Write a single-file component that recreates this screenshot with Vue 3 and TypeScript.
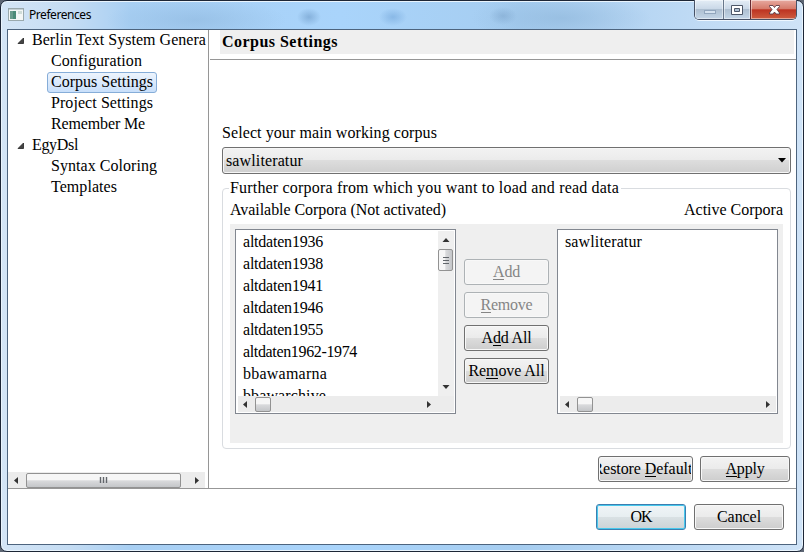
<script setup lang="ts">
import type { Directive } from 'vue'

interface TreeRow { label: string; width: number; parent?: boolean; selected?: boolean }
interface Action { before: string; key: string; after: string; width: number; disabled?: boolean }

const tree: TreeRow[] = [
  { label: 'Berlin Text System Genera', width: 174, parent: true },
  { label: 'Configuration', width: 91 },
  { label: 'Corpus Settings', width: 102, selected: true },
  { label: 'Project Settings', width: 102 },
  { label: 'Remember Me', width: 94 },
  { label: 'EgyDsl', width: 46, parent: true },
  { label: 'Syntax Coloring', width: 106 },
  { label: 'Templates', width: 66 },
]

const available = [
  { name: 'altdaten1936', width: 80 },
  { name: 'altdaten1938', width: 80 },
  { name: 'altdaten1941', width: 80 },
  { name: 'altdaten1946', width: 80 },
  { name: 'altdaten1955', width: 80 },
  { name: 'altdaten1962-1974', width: 114 },
  { name: 'bbawamarna', width: 84 },
  { name: 'bbawarchive', width: 83 },
]

const actions: Action[] = [
  { before: '', key: 'A', after: 'dd', width: 27, disabled: true },
  { before: '', key: 'R', after: 'emove', width: 52, disabled: true },
  { before: 'A', key: 'd', after: 'd All', width: 50 },
  { before: 'Re', key: 'm', after: 'ove All', width: 76 },
]

// Spreads the letters of a label over the given width in pixels.
const vFit: Directive<HTMLElement, number> = {
  mounted(el, { value }) {
    const count = (el.textContent ?? '').length
    const natural = el.getBoundingClientRect().width
    el.style.letterSpacing = `${(value - natural) / count}px`
  },
}
</script>

<template>
  <div class="window">
    <header class="titlebar">
      <svg class="app-icon" width="16" height="14" viewBox="0 0 16 14">
        <rect x=".5" y=".5" width="15" height="12" fill="#f4f7f6" stroke="#9aa9ad" />
        <rect x="2" y="3" width="6" height="8" fill="#4b8b78" />
        <rect x="2" y="3" width="3" height="8" fill="#6a9c8d" />
        <rect x="10" y="3" width="4" height="3" fill="#cfdcd8" />
        <path d="M1 1.5h14" stroke="#c5d1d6" />
      </svg>
      <span v-fit="62" class="fit title">Preferences</span>
      <div class="caption-buttons">
        <div class="cap min">
          <svg width="28" height="19" viewBox="0 0 28 19"><rect x="9.5" y="10.5" width="11" height="3" fill="#d5e2ef" stroke="#92a6bd" /></svg>
        </div>
        <div class="cap max">
          <svg width="26" height="19" viewBox="0 0 26 19"><path d="M7.500 5.500h11v9h-11zM10.500 8.500v3h5v-3z" fill="#fff" fill-rule="evenodd" stroke="#4d5768" /></svg>
        </div>
        <div class="cap close">
          <svg width="46" height="19" viewBox="0 0 46 19"><path d="M18.500 5.500h3.500l1.500 2 1.500-2h3.500v1l-2.500 3 2.500 3.500v1h-3.500l-1.500-2-1.500 2h-3.500v-1l2.500-3.500-2.500-3z" fill="#fff" stroke="#5b3b45" stroke-width=".9" /></svg>
        </div>
      </div>
    </header>

    <main class="client">
      <div class="upper">
        <nav class="sidebar">
          <div class="tree">
            <div v-for="row in tree" :key="row.label" class="tree-row" :class="{ child: !row.parent }">
              <svg v-if="row.parent" class="twisty" width="8" height="8" viewBox="0 0 8 8"><path d="M6.500 1v5.500H1z" fill="#444" stroke="#222" stroke-width=".8" /></svg>
              <span class="node" :class="{ selected: row.selected }"><span v-fit="row.width" class="fit">{{ row.label }}</span></span>
            </div>
          </div>
          <div class="hscroll side-scroll">
            <svg width="18" height="15" viewBox="0 0 18 15"><path d="M10 4v7L6 7.500z" fill="#333" /></svg>
            <div class="thumb wide">
              <svg width="9" height="8" viewBox="0 0 9 8"><path d="M1.500 1v6M4.500 1v6M7.500 1v6" stroke="#62666b" stroke-width="1.4" /></svg>
            </div>
            <svg class="end" width="18" height="15" viewBox="0 0 18 15"><path d="M8 4v7l4-3.500z" fill="#333" /></svg>
          </div>
        </nav>

        <section class="page">
          <div class="page-head">
            <h1><span v-fit="116" class="fit">Corpus Settings</span></h1>
          </div>
          <div class="page-body">
            <div class="select-label"><span v-fit="215" class="fit">Select your main working corpus</span></div>
            <div class="combo">
              <span v-fit="77" class="fit">sawliteratur</span>
              <svg width="8" height="5" viewBox="0 0 8 5"><path d="M0 0h8L4 4.500z" fill="#000" /></svg>
            </div>
            <fieldset class="group">
              <legend><span v-fit="389" class="fit">Further corpora from which you want to load and read data</span></legend>
              <div class="list-heads">
                <span v-fit="216" class="fit">Available Corpora (Not activated)</span>
                <span v-fit="99" class="fit">Active Corpora</span>
              </div>
              <div class="transfer">
                <div class="listbox">
                  <div class="list-main">
                    <div class="items">
                      <div v-for="item in available" :key="item.name" class="item"><span v-fit="item.width" class="fit">{{ item.name }}</span></div>
                    </div>
                    <div class="vscroll">
                      <svg width="16" height="18" viewBox="0 0 16 18"><path d="M4.500 11h7L8 7z" fill="#333" /></svg>
                      <div class="vthumb"><svg width="8" height="9" viewBox="0 0 8 9"><path d="M1 1.500h6M1 4.500h6M1 7.500h6" stroke="#62666b" /></svg></div>
                      <svg class="bottom" width="16" height="16" viewBox="0 0 16 16"><path d="M4.500 5h7L8 9z" fill="#333" /></svg>
                    </div>
                  </div>
                  <div class="hscroll with-corner">
                    <svg width="17" height="15" viewBox="0 0 17 15"><path d="M9 4v7L5 7.500z" fill="#333" /></svg>
                    <div class="thumb"></div>
                    <svg class="end" width="18" height="15" viewBox="0 0 18 15"><path d="M8 4v7l4-3.500z" fill="#333" /></svg>
                  </div>
                </div>
                <div class="actions">
                  <button v-for="a in actions" :key="a.key" class="btn" :disabled="a.disabled">
                    <span v-fit="a.width" class="fit">{{ a.before }}<u>{{ a.key }}</u>{{ a.after }}</span>
                  </button>
                </div>
                <div class="listbox">
                  <div class="list-main">
                    <div class="items">
                      <div class="item"><span v-fit="77" class="fit">sawliteratur</span></div>
                    </div>
                  </div>
                  <div class="hscroll">
                    <svg width="17" height="15" viewBox="0 0 17 15"><path d="M9 4v7L5 7.500z" fill="#333" /></svg>
                    <div class="thumb"></div>
                    <svg class="end" width="18" height="15" viewBox="0 0 18 15"><path d="M8 4v7l4-3.500z" fill="#333" /></svg>
                  </div>
                </div>
              </div>
            </fieldset>
            <div class="page-buttons">
              <button class="btn restore"><span class="clip"><span v-fit="106" class="fit">Restore <u>D</u>efaults</span></span></button>
              <button class="btn apply"><span v-fit="39" class="fit"><u>A</u>pply</span></button>
            </div>
          </div>
        </section>
      </div>
      <footer class="dialog-buttons">
        <button class="btn primary"><span v-fit="21" class="fit">OK</span></button>
        <button class="btn"><span v-fit="44" class="fit">Cancel</span></button>
      </footer>
    </main>
  </div>
</template>

<style>
body { background: #5d6674; overflow: hidden; }
</style>

<style scoped>
* { box-sizing: border-box; }
svg { display: block; flex: none; }
.window {
  width: 804px; height: 552px; padding: 0 6px 6px;
  display: flex; flex-direction: column;
  font: 16px/20px "Liberation Serif", serif; color: #000;
  border: 1px solid #1d2636; border-radius: 7px;
  box-shadow: inset 0 0 0 1px #e9f4fd;
  background:
    radial-gradient(ellipse 90px 22px at 195px 19px, #8fb8de99, transparent),
    radial-gradient(ellipse 12px 9px at 308px 16px, #6794c288, transparent),
    radial-gradient(ellipse 14px 9px at 392px 16px, #6ea2d788, transparent),
    radial-gradient(ellipse 14px 9px at 502px 15px, #7ca4cb88, transparent),
    radial-gradient(ellipse 90px 24px at 560px 17px, #8db5d999, transparent),
    linear-gradient(90deg, #d4e5f6 0, #c4dcf3 70px, #a8cff3 130px, #a9d4fb 340px, #a6cdf0 520px, #b7d6f3 640px, #cfe3f7 804px);
  background-color: #b8d6f3;
}
.fit { display: inline-block; white-space: pre; flex: none; }
.titlebar { height: 28px; flex: none; display: flex; align-items: flex-start; padding-left: 1px; }
.app-icon { margin-top: 7px; }
.title { font: 12px/16px "Noto Sans", sans-serif; margin: 6px 0 0 5px; }
.caption-buttons {
  display: flex; margin-left: auto; margin-right: 0; width: 103px; height: 20px; margin-top: -1px;
  border: 1px solid #475267; border-top: 0; border-radius: 0 0 5px 5px; overflow: hidden;
  box-shadow: 0 1px 0 #eef7ff;
}
.cap { height: 19px; background: linear-gradient(#e4edf6 0, #cbd9e8 45%, #aebfd1 50%, #c4d6e7 100%); box-shadow: inset 0 0 0 1px #ffffff77; }
.cap.min { width: 28px; }
.cap.max { width: 27px; border-left: 1px solid #68778b; }
.cap.close { flex: 1; border-left: 1px solid #672b32; background: linear-gradient(#e7aaa0 0, #d67c6c 45%, #bd3422 52%, #ce5c3f 100%); }

.client { width: 790px; height: 516px; border: 1px solid #4d647e; background: #fff; display: flex; flex-direction: column; }
.upper { height: 459px; flex: none; display: flex; border-bottom: 1px solid #979797; }
.sidebar { width: 201px; display: flex; flex-direction: column; border-right: 1px solid #969696; flex: none; }
.tree { width: 198px; height: 442px; overflow: hidden; }
.tree-row { height: 21px; display: flex; align-items: center; padding-left: 9px; }
.tree-row.child { padding-left: 39px; }
.twisty { margin-right: 3px; }
.node { height: 21px; padding: 0 3px; border: 1px solid transparent; line-height: 18px; flex: none; }
.node.selected { border-color: #86add8; border-radius: 3px; background: linear-gradient(#edf4fd, #c8dffa); }
.hscroll { height: 16px; display: flex; align-items: center; background: #ececec; flex: none; }
.side-scroll { width: 197px; }
.thumb { width: 16px; height: 15px; border: 1px solid #929292; border-radius: 2px; background: linear-gradient(#f6f6f6 0 45%, #d9dadc 52%, #c4c6c9); display: flex; align-items: center; justify-content: center; }
.thumb.wide { width: 155px; }
.end { margin-left: auto; }

.page { flex: 1; display: flex; flex-direction: column; }
.page-head { height: 30px; padding: 0 2px 5px 10px; border-bottom: 1px solid #969696; margin-left: 1px; }
.page-head h1 { margin: 0; height: 24px; background: #efefef; padding-left: 2px; font-size: 16px; line-height: 24px; font-weight: bold; }
.page-body { flex: 1; padding: 63px 5px 0 13px; display: flex; flex-direction: column; }
.select-label { height: 24px; line-height: 20px; }
.combo { height: 27px; display: flex; align-items: center; justify-content: space-between; padding: 0 4px 0 3px; border: 1px solid #707070; border-radius: 3px; background: linear-gradient(#f2f2f2, #ebebeb 48%, #dddddd 50%, #cfcfcf); box-shadow: inset 0 0 0 1px #f6f6f6; }
.group { margin: 4px 0 0; height: 271px; min-width: 0; border: 1px solid #d9dce0; border-radius: 4px; padding: 0 7px 6px; }
.group legend { padding: 0 2px 0 1px; margin-left: -1px; height: 20px; line-height: 20px; }
.list-heads { display: flex; justify-content: space-between; height: 26px; padding-top: 2px; }
.transfer { height: 219px; background: #efefef; padding: 5px 5px 0; display: flex; }
.listbox { width: 221px; height: 185px; border: 1px solid #828790; background: #fff; padding: 1px 1px 1px 2px; display: flex; flex-direction: column; }
.list-main { height: 165px; display: flex; overflow: hidden; }
.items { flex: 1; overflow: hidden; }
.item { height: 22px; line-height: 22px; padding-left: 5px; }
.vscroll { width: 16px; height: 165px; background: #efefef; display: flex; flex-direction: column; }
.vthumb { height: 22px; width: 15px; border: 1px solid #929292; border-radius: 2px; background: linear-gradient(90deg, #f6f6f6 0 45%, #d9dadc 52%, #c4c6c9); display: flex; align-items: center; justify-content: center; }
.bottom { margin-top: auto; }
.with-corner { padding-right: 17px; }
.actions { width: 101px; padding: 30px 8px 0; display: flex; flex-direction: column; gap: 7px; }
.btn { height: 26px; padding: 0; display: flex; align-items: center; justify-content: center; flex: none; font: inherit; color: #000; border: 1px solid #707070; border-radius: 3px; background: linear-gradient(#f3f3f3, #ebebeb 48%, #dddddd 50%, #cdcdcd); box-shadow: inset 0 0 0 1px #f8f8f8; }
.btn:disabled { color: #858585; background: #f4f4f4; border-color: #adb2b5; }
u { text-decoration: none; box-shadow: inset 0 -1px 0 currentColor; display: inline-block; line-height: 17px; height: 17px; }
.page-buttons { display: flex; justify-content: flex-end; gap: 7px; padding: 7px 1px 0 0; }
.restore { width: 95px; }
.clip { width: 91px; display: flex; justify-content: center; overflow: hidden; }
.apply { width: 90px; }
.dialog-buttons { flex: 1; display: flex; justify-content: flex-end; gap: 8px; padding: 15px 12px 0 0; }
.dialog-buttons .btn { width: 90px; }
.dialog-buttons .primary { border-color: #3c7fb1; box-shadow: inset 0 0 0 1px #48c8ec; background: linear-gradient(#f0f5f7, #e7eef1 48%, #d9e1e4 50%, #cdd3d6); }
</style>
